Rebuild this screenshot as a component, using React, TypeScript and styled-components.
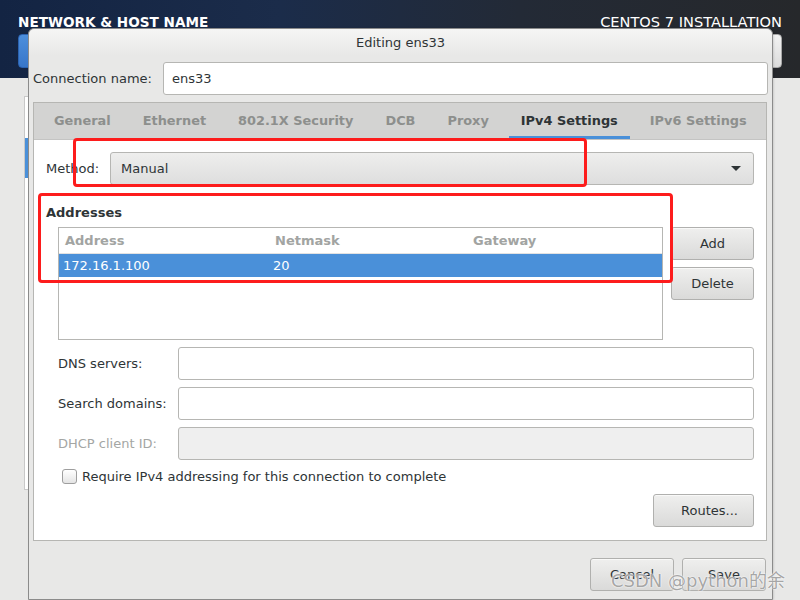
import React, { FC } from "react";
import styled, { createGlobalStyle } from "styled-components";

const GlobalStyle = createGlobalStyle`
  html, body {
    margin: 0;
    padding: 0;
    background: #e8e8e7;
  }
  body {
    font-family: "DejaVu Sans", "Noto Sans", sans-serif;
    font-size: 13px;
    color: #2e3436;
  }
`;

const Page = styled.div`
  position: relative;
  width: 800px;
  height: 600px;
  overflow: hidden;
  background: #e8e8e7;
`;

const Header = styled.header`
  height: 78px;
  display: flex;
  justify-content: space-between;
  padding: 0 18px;
  box-sizing: border-box;
  background: linear-gradient(to right, #132443 0%, #1b2c4a 35%, #232a36 65%, #26282b 100%);
`;

const HeaderSide = styled.div<{ $align: "left" | "right" }>`
  display: flex;
  flex-direction: column;
  align-items: ${(p) => (p.$align === "left" ? "flex-start" : "flex-end")};
  padding-top: 14px;
`;

const HeaderTitle = styled.div<{ $bold?: boolean }>`
  color: #ffffff;
  font-size: ${(p) => (p.$bold ? "13.6px" : "14.6px")};
  font-weight: ${(p) => (p.$bold ? 700 : 400)};
  line-height: 16px;
  white-space: nowrap;
`;

const HeaderButton = styled.div<{ $blue?: boolean }>`
  margin-top: 4px;
  width: 90px;
  height: 32px;
  border-radius: 4px;
  background: ${(p) =>
    p.$blue
      ? "linear-gradient(#4d8fdc, #3876c9)"
      : "linear-gradient(#f2f2f2, #dcdcdc)"};
  border: 1px solid ${(p) => (p.$blue ? "#2a62b0" : "#a8a8a8")};
`;

const Backdrop = styled.div`
  display: flex;
  padding: 18px 0 0 24px;
`;

const SidePanel = styled.div`
  width: 40px;
  height: 394px;
  background: #ffffff;
  border: 1px solid #c8c8c8;
  display: flex;
  flex-direction: column;
  padding-top: 41px;
  box-sizing: border-box;
`;

const SideItem = styled.div`
  width: 4px;
  height: 40px;
  background: #4a90d9;
`;

const Dialog = styled.div`
  position: absolute;
  left: 28px;
  top: 28px;
  width: 745px;
  height: 572px;
  box-sizing: border-box;
  border: 1px solid #8b8b8b;
  border-radius: 6px 6px 0 0;
  background: #e8e8e7;
  display: flex;
  flex-direction: column;
  box-shadow: 1px 0 2px rgba(0, 0, 0, 0.12);
`;

const TitleBar = styled.div`
  height: 27px;
  display: flex;
  align-items: center;
  justify-content: center;
  border-radius: 6px 6px 0 0;
  background: linear-gradient(#f5f5f4, #e8e8e7);
  color: #2e3436;
`;

const DialogBody = styled.div`
  flex: 1;
  display: flex;
  flex-direction: column;
  padding: 6px 4px 0 4px;
`;

const FieldRow = styled.div<{ $labelWidth: number; $gapTop?: number }>`
  display: flex;
  align-items: center;
  margin-top: ${(p) => p.$gapTop ?? 0}px;
  & > label {
    width: ${(p) => p.$labelWidth}px;
    flex-shrink: 0;
  }
`;

const Label = styled.label<{ $muted?: boolean }>`
  color: ${(p) => (p.$muted ? "#a4a6a4" : "#2e3436")};
  white-space: nowrap;
`;

const Entry = styled.div<{ $disabled?: boolean }>`
  flex: 1;
  height: 33px;
  box-sizing: border-box;
  border: 1px solid #b6b6b3;
  border-radius: 3px;
  background: ${(p) => (p.$disabled ? "#efefef" : "#ffffff")};
  display: flex;
  align-items: center;
  padding: 0 8px;
  color: #2e3436;
`;

const Notebook = styled.div`
  margin: 7px 1px 0 0;
  height: 439px;
  box-sizing: border-box;
  border: 1px solid #b6b6b3;
  display: flex;
  flex-direction: column;
  background: #ffffff;
`;

const TabStrip = styled.div`
  height: 36px;
  display: flex;
  gap: 8px;
  padding-left: 8px;
  background: #d3d3d2;
  border-bottom: 1px solid #c4c4c3;
`;

const Tab = styled.div<{ $active?: boolean }>`
  display: flex;
  align-items: center;
  padding: 2px 12px 0;
  font-size: 12.9px;
  font-weight: 700;
  color: ${(p) => (p.$active ? "#2e3436" : "#8d8f8d")};
  border-bottom: 3px solid ${(p) => (p.$active ? "#4a90d9" : "transparent")};
  white-space: nowrap;
`;

const TabPage = styled.div`
  flex: 1;
  display: flex;
  flex-direction: column;
  padding: 12px 12px 0 12px;
`;

const Combo = styled.div`
  flex: 1;
  height: 33px;
  box-sizing: border-box;
  border: 1px solid #b6b6b3;
  border-radius: 3px;
  background: linear-gradient(#eeeeed, #dedede);
  display: flex;
  align-items: center;
  justify-content: space-between;
  padding: 0 12px 0 10px;
`;

const Arrow = styled.span`
  width: 0;
  height: 0;
  border-left: 5px solid transparent;
  border-right: 5px solid transparent;
  border-top: 5px solid #2e3436;
`;

const SectionTitle = styled.div`
  margin-top: 20px;
  line-height: 16px;
  font-weight: 700;
`;

const Indented = styled.div`
  display: flex;
  flex-direction: column;
  padding-left: 12px;
`;

const AddressArea = styled.div`
  display: flex;
  gap: 8px;
  margin-top: 6px;
`;

const Table = styled.div`
  width: 605px;
  height: 113px;
  box-sizing: border-box;
  border: 1px solid #b6b6b3;
  background: #ffffff;
`;

const TableRow = styled.div<{ $head?: boolean; $selected?: boolean }>`
  display: grid;
  grid-template-columns: 210px 198px 1fr;
  height: ${(p) => (p.$head ? "25px" : "23px")};
  background: ${(p) => (p.$selected ? "#4a90d9" : "transparent")};
  color: ${(p) => (p.$head ? "#a2a4a2" : p.$selected ? "#ffffff" : "#2e3436")};
  font-weight: ${(p) => (p.$head ? 700 : 400)};
  border-bottom: ${(p) => (p.$head ? "1px solid #e2e2e2" : "none")};
`;

const Cell = styled.div<{ $head?: boolean }>`
  display: flex;
  align-items: center;
  padding-left: ${(p) => (p.$head ? "6px" : "4px")};
  & + & {
    border-left: ${(p) => (p.$head ? "1px solid #e2e2e2" : "none")};
  }
`;

const ButtonColumn = styled.div`
  display: flex;
  flex-direction: column;
  gap: 7px;
`;

const Button = styled.button<{ $width: number; $shift?: number }>`
  width: ${(p) => p.$width}px;
  height: 33px;
  box-sizing: border-box;
  border: 1px solid #b0b0ae;
  border-radius: 3px;
  background: linear-gradient(#efefee, #dadad9);
  font-family: "DejaVu Sans", "Noto Sans", sans-serif;
  font-size: 13px;
  color: #2e3436;
  padding: 0 0 0 ${(p) => p.$shift ?? 0}px;
  box-shadow: 0 1px 0 rgba(255, 255, 255, 0.6) inset;
`;

const CheckRow = styled.div`
  display: flex;
  align-items: center;
  gap: 5px;
  margin: 9px 0 0 4px;
  height: 15px;
`;

const CheckBox = styled.span`
  width: 15px;
  height: 15px;
  box-sizing: border-box;
  border: 1px solid #9e9e9e;
  border-radius: 3px;
  background: linear-gradient(#ffffff, #e4e4e4);
`;

const RoutesRow = styled.div`
  display: flex;
  justify-content: flex-end;
  margin-top: 10px;
`;

const Footer = styled.div`
  display: flex;
  justify-content: flex-end;
  gap: 8px;
  padding: 17px 2px 0 0;
`;

const Highlight = styled.div`
  position: absolute;
  border: 3px solid #fd1c1c;
  border-radius: 4px;
  box-sizing: border-box;
  pointer-events: none;
`;

const Watermark = styled.div`
  position: absolute;
  right: 15px;
  bottom: 8px;
  font-family: "DejaVu Sans", "Noto Sans CJK SC", sans-serif;
  font-size: 18px;
  color: rgba(150, 150, 150, 0.85);
  text-shadow: 0 0 1px #ffffff, 0 0 2px #ffffff;
  white-space: nowrap;
`;

const tabs = ["General", "Ethernet", "802.1X Security", "DCB", "Proxy", "IPv4 Settings", "IPv6 Settings"];

const AddressTable: FC = () => (
  <Table>
    <TableRow $head>
      <Cell $head>Address</Cell>
      <Cell $head>Netmask</Cell>
      <Cell $head>Gateway</Cell>
    </TableRow>
    <TableRow $selected>
      <Cell>172.16.1.100</Cell>
      <Cell>20</Cell>
      <Cell></Cell>
    </TableRow>
  </Table>
);

const App: FC = () => {
  return (
    <>
      <GlobalStyle />
      <Page>
        <Header>
          <HeaderSide $align="left">
            <HeaderTitle $bold>NETWORK &amp; HOST NAME</HeaderTitle>
            <HeaderButton $blue />
          </HeaderSide>
          <HeaderSide $align="right">
            <HeaderTitle>CENTOS 7 INSTALLATION</HeaderTitle>
            <HeaderButton />
          </HeaderSide>
        </Header>
        <Backdrop>
          <SidePanel>
            <SideItem />
          </SidePanel>
        </Backdrop>

        <Dialog>
          <TitleBar>Editing ens33</TitleBar>
          <DialogBody>
            <FieldRow $labelWidth={130}>
              <Label>Connection name:</Label>
              <Entry>ens33</Entry>
            </FieldRow>
            <Notebook>
              <TabStrip>
                {tabs.map((t) => (
                  <Tab key={t} $active={t === "IPv4 Settings"}>
                    {t}
                  </Tab>
                ))}
              </TabStrip>
              <TabPage>
                <FieldRow $labelWidth={64}>
                  <Label>Method:</Label>
                  <Combo>
                    <span>Manual</span>
                    <Arrow />
                  </Combo>
                </FieldRow>
                <SectionTitle>Addresses</SectionTitle>
                <Indented>
                  <AddressArea>
                    <AddressTable />
                    <ButtonColumn>
                      <Button $width={83}>Add</Button>
                      <Button $width={83}>Delete</Button>
                    </ButtonColumn>
                  </AddressArea>
                  <FieldRow $labelWidth={120} $gapTop={7}>
                    <Label>DNS servers:</Label>
                    <Entry />
                  </FieldRow>
                  <FieldRow $labelWidth={120} $gapTop={7}>
                    <Label>Search domains:</Label>
                    <Entry />
                  </FieldRow>
                  <FieldRow $labelWidth={120} $gapTop={7}>
                    <Label $muted>DHCP client ID:</Label>
                    <Entry $disabled />
                  </FieldRow>
                  <CheckRow>
                    <CheckBox />
                    <Label>Require IPv4 addressing for this connection to complete</Label>
                  </CheckRow>
                  <RoutesRow>
                    <Button $width={101} $shift={12}>Routes...</Button>
                  </RoutesRow>
                </Indented>
              </TabPage>
            </Notebook>
            <Footer>
              <Button $width={84}>Cancel</Button>
              <Button $width={84}>Save</Button>
            </Footer>
          </DialogBody>
        </Dialog>

        <Highlight style={{ left: 73, top: 138, width: 514, height: 49 }} />
        <Highlight style={{ left: 38, top: 193, width: 635, height: 90 }} />
        <Watermark>CSDN @python的余</Watermark>
      </Page>
    </>
  );
};

export default App;
